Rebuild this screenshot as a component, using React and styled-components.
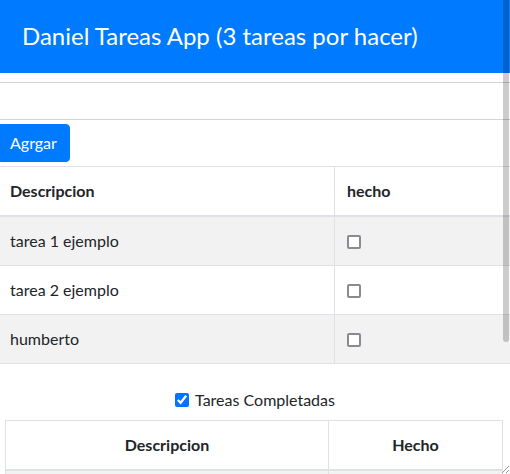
import React from "react";
import styled, { createGlobalStyle } from "styled-components";

const GlobalStyle = createGlobalStyle`
  html, body {
    margin: 0;
    padding: 0;
    background: #fff;
    overflow: hidden;
  }
  body {
    font-family: "Lato", "Liberation Sans", sans-serif;
    font-size: 16px;
    color: #212529;
  }
  * {
    box-sizing: border-box;
  }
`;

const Frame = styled.div`
  position: relative;
  width: 510px;
  height: 474px;
  overflow: hidden;
`;

const Header = styled.header`
  display: flex;
  align-items: center;
  height: 73px;
  padding: 0 0 3px 22px;
  background-color: #007bff;
  color: #fff;
  font-size: 24px;
  font-weight: 400;
`;

const Form = styled.div`
  display: flex;
  flex-direction: column;
  align-items: flex-start;
  gap: 4px;
  margin: 9px 0 0 -3px;
  width: 530px;
`;

const TextInput = styled.input`
  display: block;
  width: 100%;
  height: 38px;
  border: 1px solid #ced4da;
  border-radius: 4px;
  padding: 6px 12px;
  font: inherit;
  color: #495057;
  background: #fff;
  outline: none;
`;

const Button = styled.button`
  height: 38px;
  padding: 6px 12px;
  border: 1px solid #007bff;
  border-radius: 4px;
  background-color: #007bff;
  color: #fff;
  font: inherit;
  line-height: 24px;
  cursor: pointer;
`;

const Table = styled.table`
  width: ${(p) => p.$width}px;
  border-collapse: collapse;
  margin: ${(p) => p.$margin || 0};
  line-height: 24px;
`;

const Th = styled.th`
  width: ${(p) => (p.$width ? `${p.$width}px` : "auto")};
  padding: 12px;
  border: 1px solid #dee2e6;
  border-bottom-width: 2px;
  text-align: ${(p) => (p.$center ? "center" : "left")};
  font-weight: 700;
  vertical-align: bottom;
`;

const Tr = styled.tr`
  &:nth-child(odd) {
    background-color: #f2f2f2;
  }
`;

const Td = styled.td`
  padding: 12px;
  border: 1px solid #dee2e6;
  vertical-align: top;
`;

const Check = styled.input.attrs({ type: "checkbox" })`
  width: 14px;
  height: 14px;
  margin: 0;
  accent-color: #0075ff;
`;

const TaskCheck = styled.input.attrs({ type: "checkbox" })`
  appearance: none;
  display: block;
  width: 14px;
  height: 14px;
  margin: 6px 0 0;
  border: 2px solid #8a8a90;
  border-radius: 2px;
  background: #fff;
`;

const Toggle = styled.label`
  display: flex;
  justify-content: center;
  align-items: center;
  gap: 6px;
  margin: 24px 0 8px;
  line-height: 24px;
`;

const ScrollThumb = styled.div`
  position: absolute;
  top: 0;
  right: 1px;
  width: 6px;
  height: 342px;
  border-radius: 0 0 3px 3px;
  background-color: rgba(0, 0, 0, 0.2);
`;

const Grip = styled.svg`
  position: absolute;
  right: 0;
  bottom: 0;
`;

const tareas = [
  { id: 1, descripcion: "tarea 1 ejemplo", hecho: false },
  { id: 2, descripcion: "tarea 2 ejemplo", hecho: false },
  { id: 3, descripcion: "humberto", hecho: false },
];

export default function App() {
  const pendientes = tareas.filter((t) => !t.hecho).length;

  return (
    <Frame>
      <GlobalStyle />
      <Header>Daniel Tareas App ({pendientes} tareas por hacer)</Header>

      <Form>
        <TextInput type="text" />
        <Button>Agrgar</Button>
        <Table $width={530}>
          <thead>
            <tr>
              <Th $width={337}>Descripcion</Th>
              <Th>hecho</Th>
            </tr>
          </thead>
          <tbody>
            {tareas.map((t) => (
              <Tr key={t.id}>
                <Td>{t.descripcion}</Td>
                <Td>
                  <TaskCheck defaultChecked={t.hecho} />
                </Td>
              </Tr>
            ))}
          </tbody>
        </Table>
      </Form>

      <Toggle>
        <Check defaultChecked />
        Tareas Completadas
      </Toggle>

      <Table $width={498} $margin="0 0 0 5px">
        <thead>
          <tr>
            <Th $width={323} $center>
              Descripcion
            </Th>
            <Th $center>Hecho</Th>
          </tr>
        </thead>
        <tbody>
          <Tr>
            <Td>&nbsp;</Td>
            <Td>&nbsp;</Td>
          </Tr>
        </tbody>
      </Table>

      <ScrollThumb />
      <Grip width="11" height="11" viewBox="0 0 11 11">
        <path d="M10 3 L3 10 M10 7 L7 10" stroke="#9a9a9a" strokeWidth="1" />
      </Grip>
    </Frame>
  );
}
